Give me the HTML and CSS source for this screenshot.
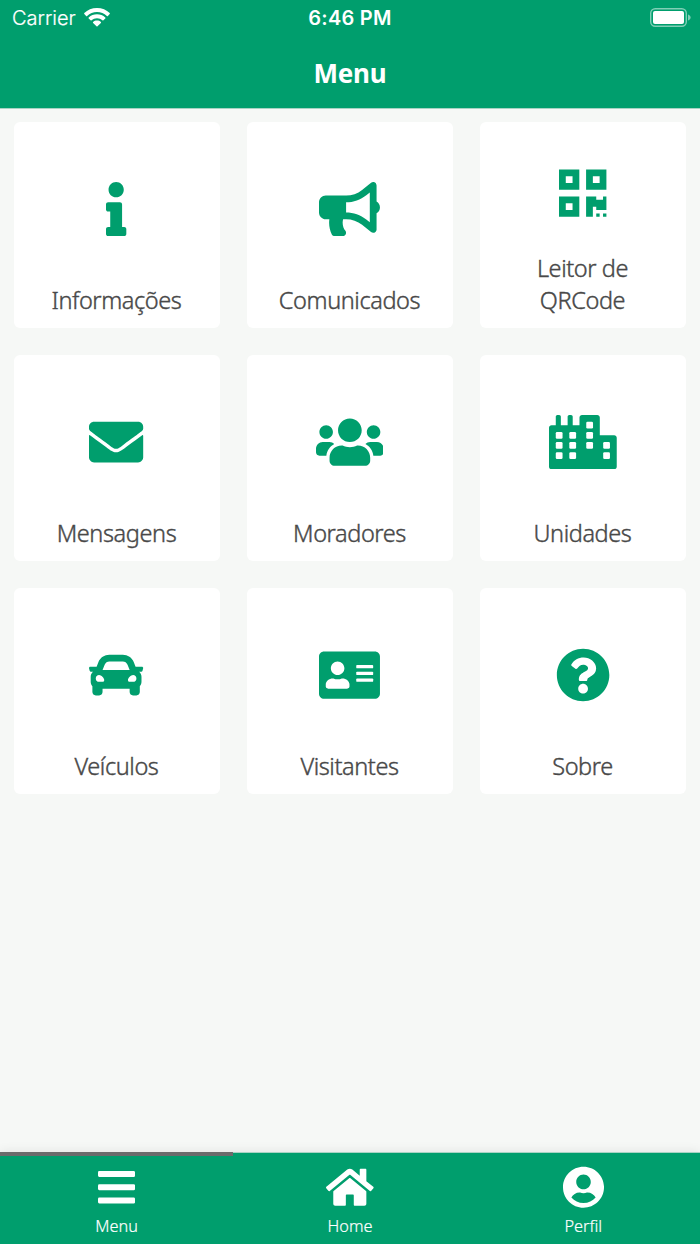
FILE: index.html
```html
<!DOCTYPE html>
<html lang="pt-BR">
<head>
<meta charset="utf-8">
<meta name="viewport" content="width=device-width, initial-scale=1">
<title>Menu</title>
<link rel="stylesheet" href="styles.css">
</head>
<body>
<div class="app">
  <header class="header">
    <div class="status">
      <div class="status-left">
        <span class="carrier">Carrier</span>
        <svg class="wifi" viewBox="0 0 26 19"><path d="M13 0C8 0 3.5 1.9.3 5.1c-.3.3-.3.7 0 1l1.8 1.8c.3.3.7.3 1 0C5.800 5.400 9.200 4 13 4s7.200 1.400 9.900 3.900c.3.3.7.3 1 0l1.800-1.800c.3-.3.3-.7 0-1C22.500 1.900 18 0 13 0zM13 6.300c-3.200 0-6.100 1.200-8.300 3.200-.3.3-.3.7 0 1l1.900 1.800c.3.3.7.3 1 0C9 11 10.900 10.200 13 10.200s4 .8 5.400 2.100c.3.3.7.3 1 0l1.900-1.800c.3-.3.3-.7 0-1C19.100 7.500 16.200 6.300 13 6.300zM13 12.500c-1.500 0-2.800.5-3.900 1.400-.3.3-.3.700 0 1l3.400 3.400c.3.3.7.3 1 0l3.400-3.400c.3-.3.3-.7 0-1-1.100-.9-2.400-1.400-3.900-1.400z"/></svg>
      </div>
      <span class="time">6:46 PM</span>
      <div class="status-right">
        <svg class="battery" viewBox="0 0 41 19"><rect class="battery-shell" x=".7" y=".7" width="35.600" height="17.600" rx="4.500"/><rect x="3" y="3" width="31" height="13" rx="2"/><path class="battery-tip" d="M38 6.500c1.600.5 2.600 1.700 2.600 3s-1 2.500-2.600 3z"/></svg>
      </div>
    </div>
    <h1 class="title">Menu</h1>
  </header>

  <main class="grid">
    <a class="card">
      <span class="icon"><svg viewBox="0 0 192 512"><path d="M20 424.229h20V279.771H20c-11.046 0-20-8.954-20-20V212c0-11.046 8.954-20 20-20h112c11.046 0 20 8.954 20 20v212.229h20c11.046 0 20 8.954 20 20V492c0 11.046-8.954 20-20 20H20c-11.046 0-20-8.954-20-20v-47.771c0-11.046 8.954-20 20-20zM96 0C56.235 0 24 32.235 24 72s32.235 72 72 72 72-32.235 72-72S135.764 0 96 0z"/></svg></span>
      <span class="label">Informações</span>
    </a>
    <a class="card">
      <span class="icon"><svg viewBox="0 0 576 512"><path d="M576 240c0-23.630-12.950-44.040-32-55.120V32.010C544 23.260 537.020 0 512 0c-7.120 0-14.190 2.380-19.980 7.020l-85.030 68.030C364.280 109.190 310.660 128 256 128H64c-35.350 0-64 28.650-64 64v96c0 35.350 28.650 64 64 64h33.700c-1.390 10.480-2.180 21.140-2.180 32 0 39.770 9.260 77.350 25.560 110.940 5.190 10.690 16.520 17.060 28.400 17.060h74.280c26.050 0 41.690-29.840 25.900-50.560-16.400-21.520-26.150-48.360-26.150-77.440 0-11.110 1.620-21.790 4.410-32H256c54.660 0 108.280 18.810 150.980 52.950l85.030 68.030a32.023 32.023 0 0 0 19.980 7.020c24.920 0 32-22.780 32-32V295.130C563.050 284.040 576 263.630 576 240zm-96 141.420l-33.050-26.440C392.950 311.780 325.120 288 256 288v-96c69.120 0 136.950-23.780 190.950-66.980L480 98.580v282.840z"/></svg></span>
      <span class="label">Comunicados</span>
    </a>
    <a class="card">
      <span class="icon"><svg viewBox="0 0 448 512"><path d="M0 224h192V32H0v192zM64 96h64v64H64V96zm192-64v192h192V32H256zm128 128h-64V96h64v64zM0 480h192V288H0v192zm64-128h64v64H64v-64zm352-64h32v128h-96v-32h-32v96h-64V288h96v32h64v-32zm0 160h32v32h-32v-32zm-64 0h32v32h-32v-32z"/></svg></span>
      <span class="label">Leitor de<br>QRCode</span>
    </a>
    <a class="card">
      <span class="icon"><svg viewBox="0 0 512 512"><path d="M502.300 190.800c3.900-3.100 9.700-.2 9.700 4.700V400c0 26.500-21.500 48-48 48H48c-26.500 0-48-21.500-48-48V195.600c0-5 5.700-7.800 9.700-4.700 22.400 17.400 52.100 39.500 154.100 113.600 21.100 15.400 56.700 47.800 92.200 47.600 35.700.3 72-32.800 92.300-47.600 102-74.100 131.600-96.300 154-113.700zM256 320c23.200.4 56.600-29.200 73.400-41.400 132.700-96.300 142.800-104.700 173.400-128.700 5.800-4.500 9.200-11.500 9.200-18.900v-19c0-26.500-21.500-48-48-48H48c-26.500 0-48 21.500-48 48v19c0 7.400 3.400 14.300 9.200 18.900 30.600 23.900 40.700 32.400 173.400 128.700 16.800 12.200 50.200 41.800 73.400 41.400z"/></svg></span>
      <span class="label">Mensagens</span>
    </a>
    <a class="card">
      <span class="icon"><svg viewBox="0 0 640 512"><path d="M96 224c35.300 0 64-28.700 64-64s-28.700-64-64-64-64 28.700-64 64 28.700 64 64 64zm448 0c35.300 0 64-28.700 64-64s-28.700-64-64-64-64 28.700-64 64 28.700 64 64 64zm32 32h-64c-17.600 0-33.500 7.100-45.100 18.600 40.300 22.100 68.900 62 75.100 109.400h66c17.700 0 32-14.300 32-32v-32c0-35.300-28.700-64-64-64zm-256 0c61.900 0 112-50.100 112-112S381.900 32 320 32 208 82.100 208 144s50.100 112 112 112zm76.800 32h-8.300c-20.800 10-43.900 16-68.500 16s-47.600-6-68.500-16h-8.300C179.600 288 128 339.600 128 403.200V432c0 26.500 21.500 48 48 48h288c26.500 0 48-21.500 48-48v-28.800c0-63.600-51.600-115.200-115.200-115.200zm-223.700-13.400C161.500 263.100 145.600 256 128 256H64c-35.300 0-64 28.700-64 64v32c0 17.700 14.300 32 32 32h65.900c6.300-47.400 34.900-87.300 75.200-109.400z"/></svg></span>
      <span class="label">Moradores</span>
    </a>
    <a class="card">
      <span class="icon"><svg viewBox="0 0 640 512"><path d="M616 192H480V24c0-13.260-10.740-24-24-24H312c-13.260 0-24 10.740-24 24v72h-64V16c0-8.840-7.160-16-16-16h-16c-8.840 0-16 7.160-16 16v80h-64V16c0-8.840-7.160-16-16-16H80c-8.840 0-16 7.160-16 16v80H24c-13.260 0-24 10.740-24 24v368c0 13.260 10.740 24 24 24h592c13.260 0 24-10.740 24-24V216c0-13.260-10.750-24-24-24z"/><g class="cutout"><rect x="64" y="160" width="64" height="64" rx="12"/><rect x="64" y="256" width="64" height="64" rx="12"/><rect x="64" y="352" width="64" height="64" rx="12"/><rect x="192" y="160" width="64" height="64" rx="12"/><rect x="192" y="256" width="64" height="64" rx="12"/><rect x="192" y="352" width="64" height="64" rx="12"/><rect x="352" y="64" width="64" height="64" rx="12"/><rect x="352" y="160" width="64" height="64" rx="12"/><rect x="352" y="256" width="64" height="64" rx="12"/><rect x="512" y="256" width="64" height="64" rx="12"/><rect x="512" y="352" width="64" height="64" rx="12"/></g></svg></span>
      <span class="label">Unidades</span>
    </a>
    <a class="card">
      <span class="icon"><svg viewBox="0 0 512 512"><path d="M499.990 176h-59.870l-16.640-41.600C406.380 91.630 365.570 64 319.500 64h-127c-46.060 0-86.880 27.630-103.990 70.400L71.870 176H12.010C4.200 176-1.530 183.340.37 190.910l6 24C7.700 220.250 12.500 224 18.010 224h20.070C24.650 235.730 16 252.780 16 272v48c0 16.120 6.160 30.670 16 41.930V416c0 17.670 14.330 32 32 32h32c17.670 0 32-14.330 32-32v-32h256v32c0 17.670 14.330 32 32 32h32c17.670 0 32-14.330 32-32v-54.070c9.840-11.250 16-25.800 16-41.930v-48c0-19.220-8.650-36.270-22.070-48H494c5.510 0 10.310-3.750 11.640-9.090l6-24c1.890-7.570-3.840-14.910-11.650-14.910zm-352.060-17.830c7.290-18.220 24.940-30.170 44.570-30.170h127c19.630 0 37.280 11.950 44.570 30.170L384 208H128l19.930-49.830zM96 319.800c-19.200 0-32-12.760-32-31.900S76.800 256 96 256s48 28.710 48 47.850-28.800 15.950-48 15.950zm320 0c-19.200 0-48 3.190-48-15.950S396.800 256 416 256s32 12.760 32 31.900-12.800 31.900-32 31.900z"/></svg></span>
      <span class="label">Veículos</span>
    </a>
    <a class="card">
      <span class="icon"><svg viewBox="0 0 576 512"><path d="M528 32H48C21.500 32 0 53.500 0 80v352c0 26.500 21.500 48 48 48h480c26.500 0 48-21.500 48-48V80c0-26.500-21.500-48-48-48zm-352 96c35.300 0 64 28.700 64 64s-28.700 64-64 64-64-28.700-64-64 28.700-64 64-64zm112 236.800c0 10.600-10 19.200-22.400 19.200H86.400C74 384 64 375.400 64 364.800v-19.200c0-31.800 30.100-57.600 67.200-57.600h5c12.300 5.100 25.700 8 39.800 8s27.600-2.900 39.800-8h5c37.100 0 67.200 25.800 67.200 57.600v19.200z"/><g class="cutout"><rect x="352" y="160" width="160" height="32" rx="8"/><rect x="352" y="224" width="160" height="32" rx="8"/><rect x="352" y="288" width="160" height="32" rx="8"/></g></svg></span>
      <span class="label">Visitantes</span>
    </a>
    <a class="card">
      <span class="icon"><svg viewBox="0 0 512 512"><path d="M504 256c0 136.997-111.043 248-248 248S8 392.997 8 256C8 119.083 119.043 8 256 8s248 111.083 248 248zM262.655 90c-54.497 0-89.255 22.957-116.549 63.758-3.536 5.286-2.353 12.415 2.715 16.258l34.699 26.310c5.205 3.947 12.621 3.008 16.665-2.122 17.864-22.658 30.113-35.797 57.303-35.797 20.429 0 45.698 13.148 45.698 32.958 0 14.976-12.363 22.667-32.534 33.976C247.128 238.528 216 254.941 216 296v4c0 6.627 5.373 12 12 12h56c6.627 0 12-5.373 12-12v-1.333c0-28.462 83.186-29.647 83.186-106.667 0-58.002-60.165-102-116.531-102zM256 338c-25.365 0-46 20.635-46 46 0 25.364 20.635 46 46 46s46-20.636 46-46c0-25.365-20.635-46-46-46z"/></svg></span>
      <span class="label">Sobre</span>
    </a>
  </main>

  <nav class="tabs">
    <a class="tab tab-active">
      <svg viewBox="0 0 448 512"><rect y="60" width="448" height="72" rx="16"/><rect y="220" width="448" height="72" rx="16"/><rect y="380" width="448" height="72" rx="16"/></svg>
      <span>Menu</span>
    </a>
    <a class="tab">
      <svg viewBox="0 0 576 512"><path d="M488 312.700V456c0 13.300-10.700 24-24 24H348c-6.600 0-12-5.400-12-12V356c0-6.600-5.400-12-12-12h-72c-6.600 0-12 5.400-12 12v112c0 6.600-5.400 12-12 12H112c-13.300 0-24-10.700-24-24V312.700c0-3.600 1.600-7 4.400-9.300l188-154.800c4.400-3.600 10.800-3.600 15.300 0l188 154.800c2.700 2.300 4.300 5.700 4.300 9.300zm83.600-60.900L488 182.900V44.400c0-6.600-5.400-12-12-12h-56c-6.600 0-12 5.400-12 12V117l-89.500-73.700c-17.700-14.600-43.300-14.600-61 0L4.400 251.800c-5.100 4.200-5.800 11.800-1.600 16.900l25.500 31c4.200 5.100 11.800 5.800 16.900 1.600l235.200-193.700c4.400-3.600 10.800-3.600 15.300 0l235.200 193.700c5.100 4.200 12.700 3.500 16.900-1.600l25.500-31c4.200-5.200 3.400-12.700-1.700-16.900z"/></svg>
      <span>Home</span>
    </a>
    <a class="tab">
      <svg viewBox="0 0 496 512"><path d="M248 8C111 8 0 119 0 256s111 248 248 248 248-111 248-248S385 8 248 8zm0 96c48.600 0 88 39.400 88 88s-39.400 88-88 88-88-39.400-88-88 39.400-88 88-88zm0 344c-58.700 0-111.300-26.600-146.500-68.200 18.800-35.400 55.600-59.800 98.500-59.800 2.400 0 4.800.4 7.100 1.100 13 4.200 26.600 6.900 40.900 6.900 14.300 0 28-2.700 40.900-6.900 2.300-.7 4.700-1.100 7.100-1.100 42.900 0 79.700 24.400 98.500 59.800C359.300 421.400 306.700 448 248 448z"/></svg>
      <span>Perfil</span>
    </a>
  </nav>
</div>
</body>
</html>
```
FILE: styles.css
```css
* { box-sizing: border-box; }

body {
  margin: 0;
  background: #f6f8f6;
  font-family: "Noto Sans", "Open Sans", sans-serif;
}

svg { display: block; fill: currentColor; }

.app {
  display: flex;
  flex-direction: column;
  height: 1244px;
}

.header {
  height: 108px;
  background: #009e6d;
  color: #fff;
  box-shadow: 0 1px 0 #a8d3c4;
}

.status {
  display: grid;
  grid-template-columns: 1fr auto 1fr;
  align-items: center;
  height: 36px;
  padding: 0 9px 0 12px;
  font-family: Inter, sans-serif;
  font-size: 20px;
}

.status-left { display: flex; align-items: center; gap: 8px; }
.status-right { display: flex; justify-content: flex-end; }
.carrier { font-weight: 300; -webkit-text-stroke: .2px; }
.time { font-weight: 600; letter-spacing: .25px; margin-right: 3px; }
.wifi { width: 26px; height: 19px; margin-top: -2px; }
.battery { width: 41px; height: 19px; margin-top: -1px; }
.battery-shell { fill: none; stroke: #fff; stroke-width: 1.400; opacity: .5; }
.battery-tip { opacity: .5; }

.title {
  margin: 0;
  font-size: 26px;
  font-weight: 700;
  line-height: 36px;
  padding-top: 19px;
  letter-spacing: -.2px;
  text-align: center;
}

.grid {
  flex: 1;
  display: grid;
  grid-template-columns: repeat(3, 206px);
  grid-auto-rows: 206px;
  gap: 27px;
  padding: 14px;
}

.card {
  display: flex;
  flex-direction: column;
  padding: 14px 13px 12px;
  background: #fff;
  border-radius: 6px;
  text-align: center;
}

.icon {
  flex: 1;
  display: flex;
  align-items: center;
  justify-content: center;
  margin: -2px 1px 0 0;
  color: #009e6d;
}

.card:nth-child(3n) .icon { margin-right: 0; }
.icon svg { height: 54.200px; }
.cutout { fill: #fff; }

.label {
  color: #484848;
  font-size: 23.500px;
  font-weight: 300;
  letter-spacing: -.4px;
  line-height: 31.500px;
  margin-right: 1px;
  -webkit-text-stroke: .4px;
}

.tabs {
  display: grid;
  grid-template-columns: repeat(3, 1fr);
  height: 91px;
  background: #009e6d;
  color: #fff;
  box-shadow: 0 -1px 0 #a8d3c4, 0 -2px 10px rgba(0, 0, 0, .08);
}

.tab {
  display: flex;
  flex-direction: column;
  align-items: center;
  padding-top: 10px;
  border-top: 3px solid transparent;
  font-size: 16.300px;
  font-weight: 300;
  line-height: 22px;
}

.tab span { -webkit-text-stroke: .2px; }

.tab-active {
  margin-top: -1px;
  border-top: 4px solid #6b6b6b;
}

.tab svg { height: 42.350px; margin-bottom: 7px; }
```
